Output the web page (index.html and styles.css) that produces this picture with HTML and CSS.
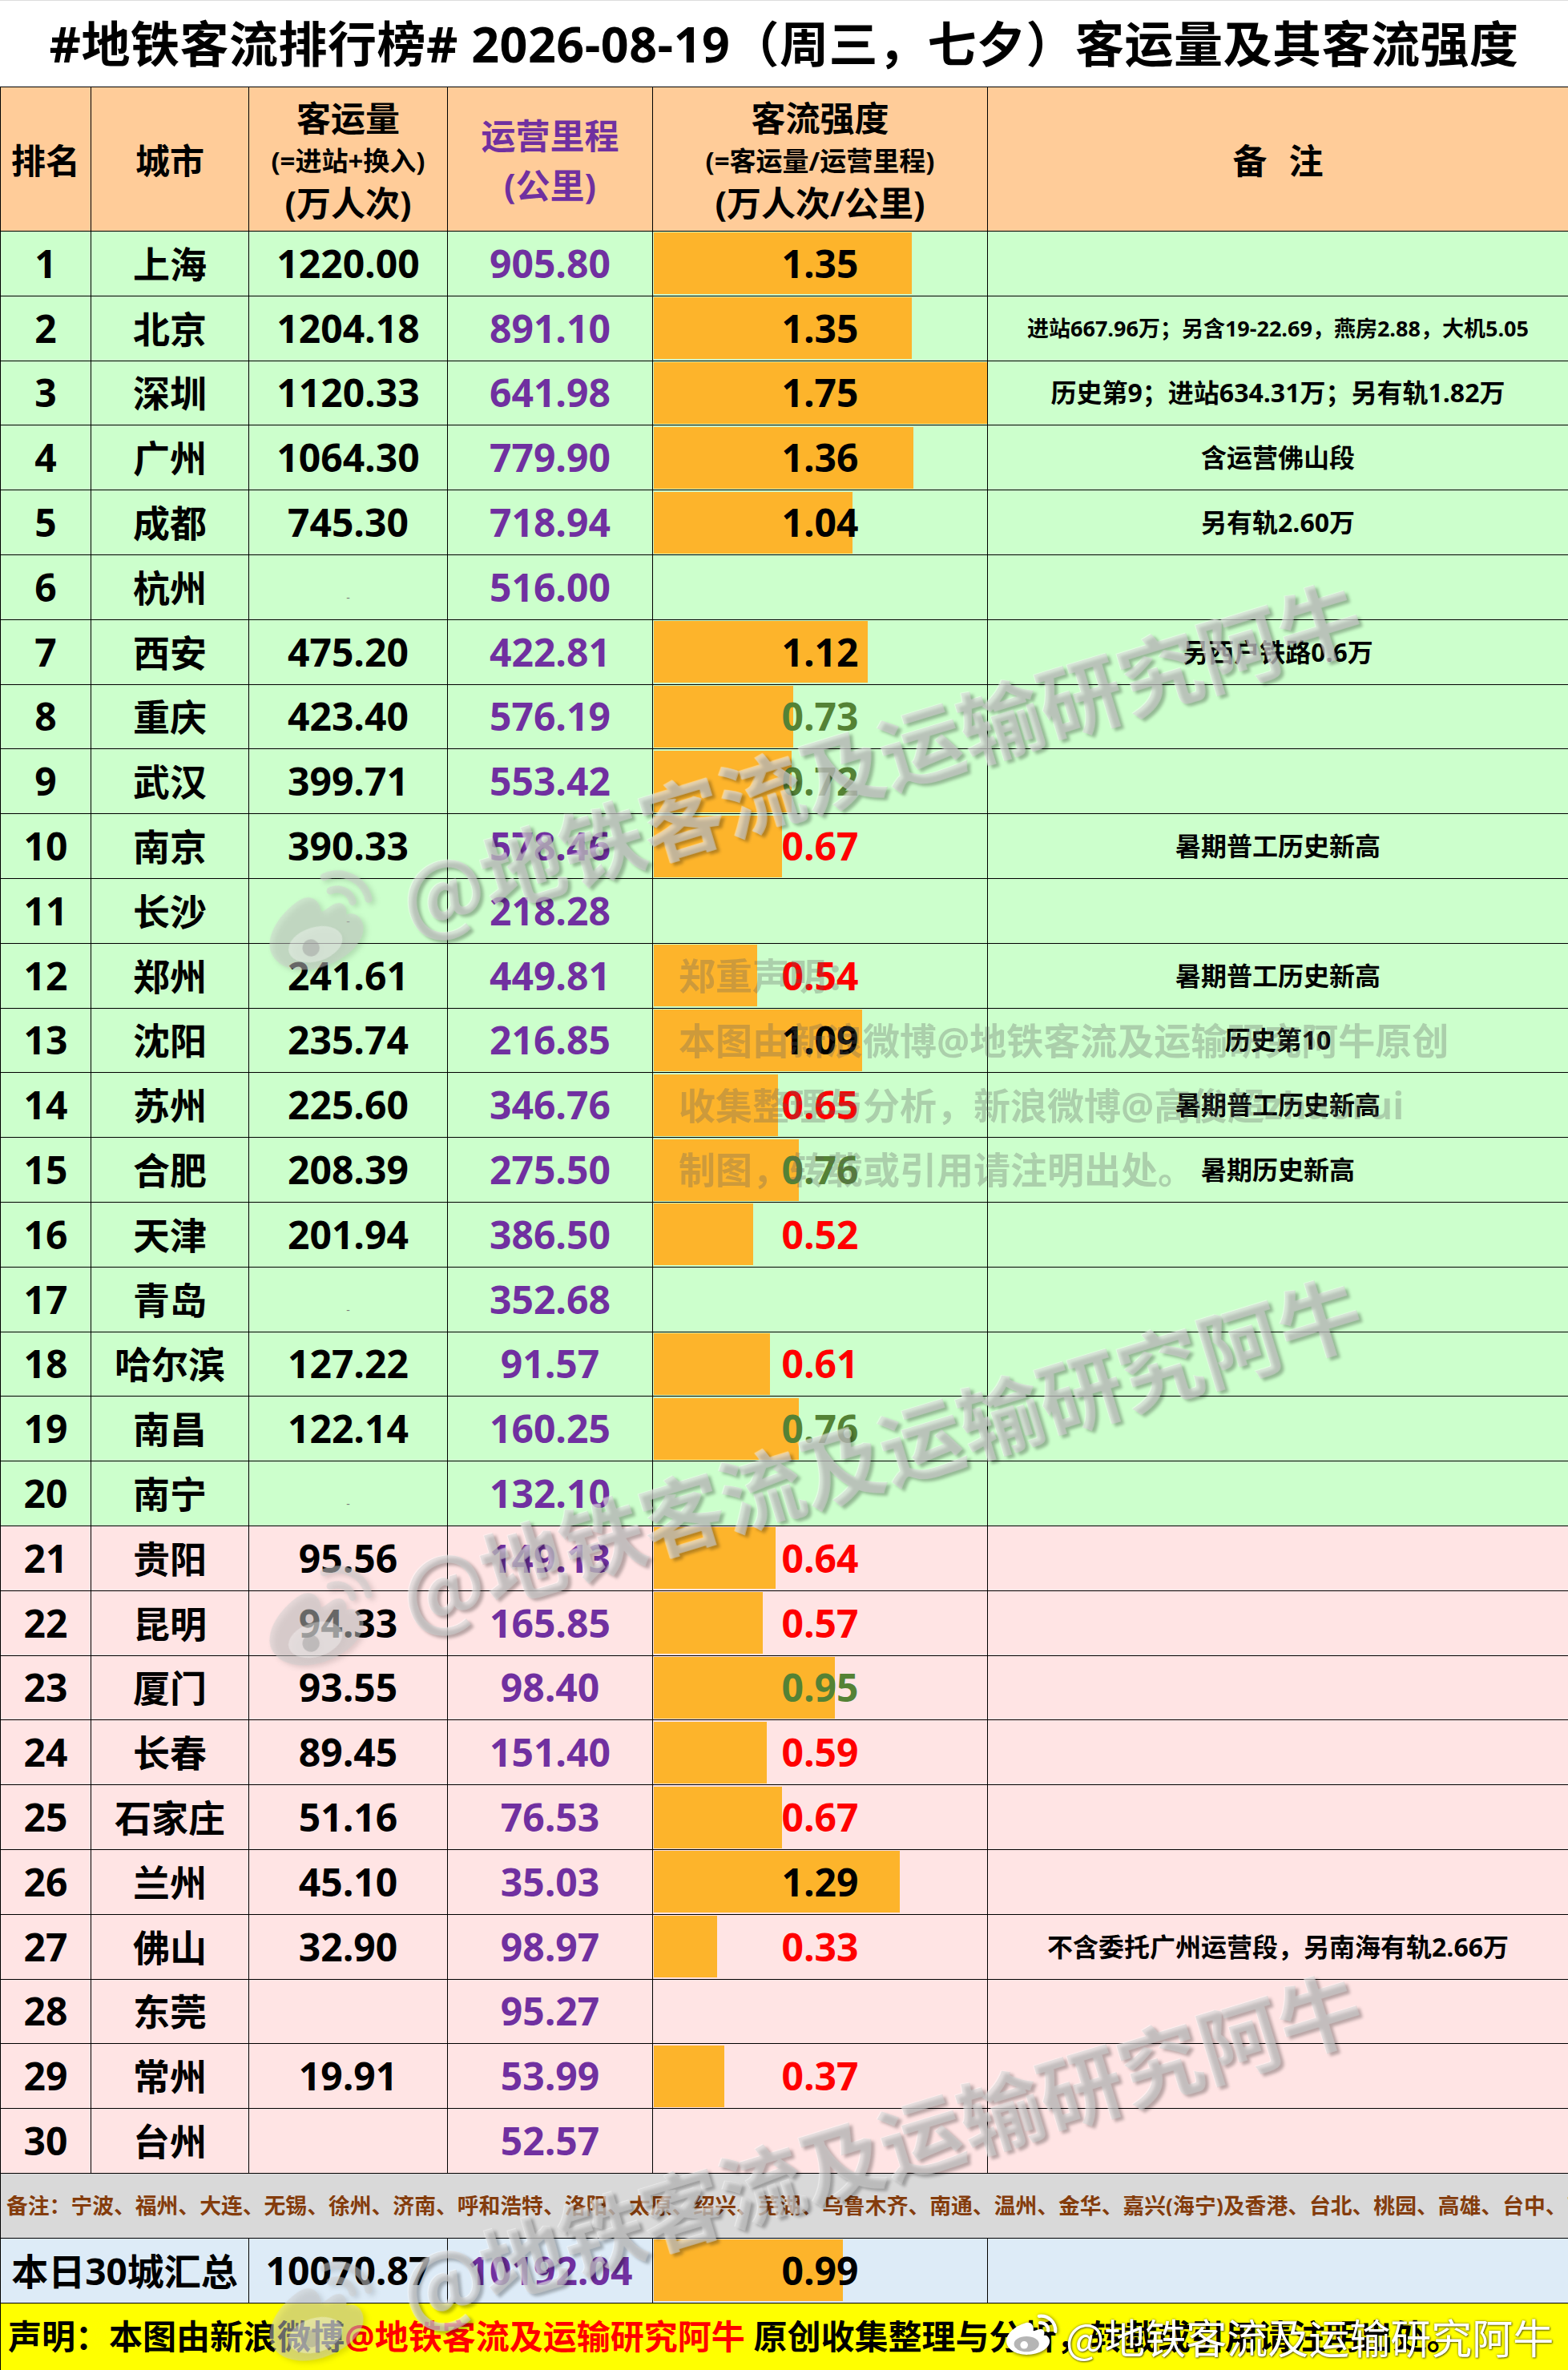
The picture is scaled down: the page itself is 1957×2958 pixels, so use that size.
FILE: index.html
```html
<!DOCTYPE html>
<html lang="zh-CN">
<head>
<meta charset="utf-8">
<title>地铁客流排行榜 2026-08-19</title>
<link rel="stylesheet" href="styles.css">
</head>
<body>
<div class="page">
  <div class="title">#地铁客流排行榜# 2026-08-19（周三，七夕）客运量及其客流强度</div>
  <table class="rank">
    <colgroup>
      <col class="c-rank"><col class="c-city"><col class="c-vol"><col class="c-len"><col class="c-int"><col class="c-note">
    </colgroup>
    <thead>
      <tr class="head">
        <th>排名</th>
        <th>城市</th>
        <th><div class="hstack"><span>客运量</span><span class="hs">(=进站+换入)</span><span>(万人次)</span></div></th>
        <th class="purple"><div class="hstack2"><span>运营里程</span><span>(公里)</span></div></th>
        <th><div class="hstack"><span>客流强度</span><span class="hs">(=客运量/运营里程)</span><span>(万人次/公里)</span></div></th>
        <th class="hnote">备 注</th>
      </tr>
    </thead>
    <tbody>
      <tr class="g"><td>1</td><td class="city">上海</td><td>1220.00</td><td class="len">905.80</td><td><div class="sc"><i class="bar" style="width:77.14%"></i><b class="v">1.35</b></div></td><td class="note"></td></tr>
      <tr class="g"><td>2</td><td class="city">北京</td><td>1204.18</td><td class="len">891.10</td><td><div class="sc"><i class="bar" style="width:77.14%"></i><b class="v">1.35</b></div></td><td class="note sm">进站667.96万；另含19-22.69，燕房2.88，大机5.05</td></tr>
      <tr class="g"><td>3</td><td class="city">深圳</td><td>1120.33</td><td class="len">641.98</td><td><div class="sc"><i class="bar" style="width:100%"></i><b class="v">1.75</b></div></td><td class="note">历史第9；进站634.31万；另有轨1.82万</td></tr>
      <tr class="g"><td>4</td><td class="city">广州</td><td>1064.30</td><td class="len">779.90</td><td><div class="sc"><i class="bar" style="width:77.71%"></i><b class="v">1.36</b></div></td><td class="note">含运营佛山段</td></tr>
      <tr class="g"><td>5</td><td class="city">成都</td><td>745.30</td><td class="len">718.94</td><td><div class="sc"><i class="bar" style="width:59.43%"></i><b class="v">1.04</b></div></td><td class="note">另有轨2.60万</td></tr>
      <tr class="g"><td>6</td><td class="city">杭州</td><td><span class="dash">-</span></td><td class="len">516.00</td><td></td><td class="note"></td></tr>
      <tr class="g"><td>7</td><td class="city">西安</td><td>475.20</td><td class="len">422.81</td><td><div class="sc"><i class="bar" style="width:64%"></i><b class="v">1.12</b></div></td><td class="note">另西户铁路0.6万</td></tr>
      <tr class="g"><td>8</td><td class="city">重庆</td><td>423.40</td><td class="len">576.19</td><td><div class="sc"><i class="bar" style="width:41.71%"></i><b class="v grn">0.73</b></div></td><td class="note"></td></tr>
      <tr class="g"><td>9</td><td class="city">武汉</td><td>399.71</td><td class="len">553.42</td><td><div class="sc"><i class="bar" style="width:41.14%"></i><b class="v grn">0.72</b></div></td><td class="note"></td></tr>
      <tr class="g"><td>10</td><td class="city">南京</td><td>390.33</td><td class="len">578.46</td><td><div class="sc"><i class="bar" style="width:38.29%"></i><b class="v red">0.67</b></div></td><td class="note">暑期普工历史新高</td></tr>
      <tr class="g"><td>11</td><td class="city">长沙</td><td><span class="dash">-</span></td><td class="len">218.28</td><td></td><td class="note"></td></tr>
      <tr class="g"><td>12</td><td class="city">郑州</td><td>241.61</td><td class="len">449.81</td><td><div class="sc"><i class="bar" style="width:30.86%"></i><b class="v red">0.54</b></div></td><td class="note">暑期普工历史新高</td></tr>
      <tr class="g"><td>13</td><td class="city">沈阳</td><td>235.74</td><td class="len">216.85</td><td><div class="sc"><i class="bar" style="width:62.29%"></i><b class="v">1.09</b></div></td><td class="note">历史第10</td></tr>
      <tr class="g"><td>14</td><td class="city">苏州</td><td>225.60</td><td class="len">346.76</td><td><div class="sc"><i class="bar" style="width:37.14%"></i><b class="v red">0.65</b></div></td><td class="note">暑期普工历史新高</td></tr>
      <tr class="g"><td>15</td><td class="city">合肥</td><td>208.39</td><td class="len">275.50</td><td><div class="sc"><i class="bar" style="width:43.43%"></i><b class="v grn">0.76</b></div></td><td class="note">暑期历史新高</td></tr>
      <tr class="g"><td>16</td><td class="city">天津</td><td>201.94</td><td class="len">386.50</td><td><div class="sc"><i class="bar" style="width:29.71%"></i><b class="v red">0.52</b></div></td><td class="note"></td></tr>
      <tr class="g"><td>17</td><td class="city">青岛</td><td><span class="dash">-</span></td><td class="len">352.68</td><td></td><td class="note"></td></tr>
      <tr class="g"><td>18</td><td class="city">哈尔滨</td><td>127.22</td><td class="len">91.57</td><td><div class="sc"><i class="bar" style="width:34.86%"></i><b class="v red">0.61</b></div></td><td class="note"></td></tr>
      <tr class="g"><td>19</td><td class="city">南昌</td><td>122.14</td><td class="len">160.25</td><td><div class="sc"><i class="bar" style="width:43.43%"></i><b class="v grn">0.76</b></div></td><td class="note"></td></tr>
      <tr class="g"><td>20</td><td class="city">南宁</td><td><span class="dash">-</span></td><td class="len">132.10</td><td></td><td class="note"></td></tr>
      <tr class="p"><td>21</td><td class="city">贵阳</td><td>95.56</td><td class="len">149.13</td><td><div class="sc"><i class="bar" style="width:36.57%"></i><b class="v red">0.64</b></div></td><td class="note"></td></tr>
      <tr class="p"><td>22</td><td class="city">昆明</td><td>94.33</td><td class="len">165.85</td><td><div class="sc"><i class="bar" style="width:32.57%"></i><b class="v red">0.57</b></div></td><td class="note"></td></tr>
      <tr class="p"><td>23</td><td class="city">厦门</td><td>93.55</td><td class="len">98.40</td><td><div class="sc"><i class="bar" style="width:54.29%"></i><b class="v grn">0.95</b></div></td><td class="note"></td></tr>
      <tr class="p"><td>24</td><td class="city">长春</td><td>89.45</td><td class="len">151.40</td><td><div class="sc"><i class="bar" style="width:33.71%"></i><b class="v red">0.59</b></div></td><td class="note"></td></tr>
      <tr class="p"><td>25</td><td class="city">石家庄</td><td>51.16</td><td class="len">76.53</td><td><div class="sc"><i class="bar" style="width:38.29%"></i><b class="v red">0.67</b></div></td><td class="note"></td></tr>
      <tr class="p"><td>26</td><td class="city">兰州</td><td>45.10</td><td class="len">35.03</td><td><div class="sc"><i class="bar" style="width:73.71%"></i><b class="v">1.29</b></div></td><td class="note"></td></tr>
      <tr class="p"><td>27</td><td class="city">佛山</td><td>32.90</td><td class="len">98.97</td><td><div class="sc"><i class="bar" style="width:18.86%"></i><b class="v red">0.33</b></div></td><td class="note">不含委托广州运营段，另南海有轨2.66万</td></tr>
      <tr class="p"><td>28</td><td class="city">东莞</td><td></td><td class="len">95.27</td><td></td><td class="note"></td></tr>
      <tr class="p"><td>29</td><td class="city">常州</td><td>19.91</td><td class="len">53.99</td><td><div class="sc"><i class="bar" style="width:21.14%"></i><b class="v red">0.37</b></div></td><td class="note"></td></tr>
      <tr class="p"><td>30</td><td class="city">台州</td><td></td><td class="len">52.57</td><td></td><td class="note"></td></tr>
    </tbody>
    <tfoot>
      <tr class="remark"><td colspan="6"><div class="remark-text">备注：宁波、福州、大连、无锡、徐州、济南、呼和浩特、洛阳、太原、绍兴、芜湖、乌鲁木齐、南通、温州、金华、嘉兴(海宁)及香港、台北、桃园、高雄、台中、高雄等城市暂未纳入统计</div></td></tr>
      <tr class="sum"><td colspan="2" class="sumlabel">本日30城汇总</td><td>10070.87</td><td class="len">10192.04</td><td><div class="sc"><i class="bar" style="width:56.57%"></i><b class="v">0.99</b></div></td><td></td></tr>
      <tr class="decl"><td colspan="6">声明：本图由新浪微博<span class="at">@地铁客流及运输研究阿牛</span> 原创收集整理与分析，转载或引用请注明出处。</td></tr>
    </tfoot>
  </table>

  <div class="wmtext">
    <div>郑重声明：</div>
    <div>本图由新浪微博@地铁客流及运输研究阿牛原创</div>
    <div>收集整理与分析，新浪微博@高俊超zhaorui</div>
    <div>制图，转载或引用请注明出处。</div>
  </div>

  <div class="wm wm1">
    <svg viewBox="0 0 120 100"><path class="wb-body" d="M50 22 C28 28 8 46 10 62 C12 80 36 90 58 88 C84 86 102 72 100 58 C99 50 92 47 88 48 C91 40 88 34 80 35 C73 36 68 40 66 38 C68 28 62 19 50 22 Z"/><ellipse class="wb-eye" cx="52" cy="66" rx="26" ry="16"/><circle class="wb-pupil" cx="47" cy="68" r="8"/><path class="wb-arc" d="M78 8 A30 30 0 0 1 112 40"/><path class="wb-arc" d="M80 22 A15 15 0 0 1 97 38"/></svg>
    <span>@地铁客流及运输研究阿牛</span>
  </div>
  <div class="wm wm2">
    <svg viewBox="0 0 120 100"><path class="wb-body" d="M50 22 C28 28 8 46 10 62 C12 80 36 90 58 88 C84 86 102 72 100 58 C99 50 92 47 88 48 C91 40 88 34 80 35 C73 36 68 40 66 38 C68 28 62 19 50 22 Z"/><ellipse class="wb-eye" cx="52" cy="66" rx="26" ry="16"/><circle class="wb-pupil" cx="47" cy="68" r="8"/><path class="wb-arc" d="M78 8 A30 30 0 0 1 112 40"/><path class="wb-arc" d="M80 22 A15 15 0 0 1 97 38"/></svg>
    <span>@地铁客流及运输研究阿牛</span>
  </div>
  <div class="wm wm3">
    <svg viewBox="0 0 120 100"><path class="wb-body" d="M50 22 C28 28 8 46 10 62 C12 80 36 90 58 88 C84 86 102 72 100 58 C99 50 92 47 88 48 C91 40 88 34 80 35 C73 36 68 40 66 38 C68 28 62 19 50 22 Z"/><ellipse class="wb-eye" cx="52" cy="66" rx="26" ry="16"/><circle class="wb-pupil" cx="47" cy="68" r="8"/><path class="wb-arc" d="M78 8 A30 30 0 0 1 112 40"/><path class="wb-arc" d="M80 22 A15 15 0 0 1 97 38"/></svg>
    <span>@地铁客流及运输研究阿牛</span>
  </div>

  <div class="wmb">
    <svg viewBox="0 0 120 100"><path class="wbw-body" d="M50 22 C28 28 8 46 10 62 C12 80 36 90 58 88 C84 86 102 72 100 58 C99 50 92 47 88 48 C91 40 88 34 80 35 C73 36 68 40 66 38 C68 28 62 19 50 22 Z"/><ellipse class="wbw-eye" cx="52" cy="66" rx="26" ry="16"/><circle class="wbw-pupil" cx="47" cy="68" r="8"/><path class="wbw-arc" d="M78 8 A30 30 0 0 1 112 40"/><path class="wbw-arc" d="M80 22 A15 15 0 0 1 97 38"/></svg>
    <span>@地铁客流及运输研究阿牛</span>
  </div>
</div>
</body>
</html>
```

FILE: styles.css
```css
html, body {
  margin: 0;
  padding: 0;
  background: #ffffff;
}

.page {
  position: relative;
  width: 1957px;
  height: 2958px;
  overflow: hidden;
  font-family: "Open Sans", "Noto Sans CJK SC", sans-serif;
  font-weight: 700;
  color: #000;
}

.title {
  height: 107px;
  border-top: 1px solid #dcdcdc;
  display: flex;
  align-items: center;
  justify-content: center;
  font-size: 61px;
  line-height: 1;
  letter-spacing: 0.5px;
}

.rank {
  border-collapse: collapse;
  table-layout: fixed;
  width: 1957px;
}

.c-rank { width: 113px; }
.c-city { width: 197px; }
.c-vol { width: 248px; }
.c-len { width: 256px; }
.c-int { width: 418px; }
.c-note { width: 725px; }

.rank th,
.rank td {
  border: 1px solid #000;
  padding: 0;
  text-align: center;
  vertical-align: middle;
  white-space: nowrap;
  overflow: hidden;
  line-height: 1;
}

.head {
  height: 180px;
}

.head th {
  background: #ffcc99;
  font-size: 43px;
  font-weight: 700;
  padding-top: 4px;
}

.hstack {
  display: flex;
  flex-direction: column;
  align-items: center;
}

.hstack span {
  line-height: 53px;
}

.hstack .hs {
  font-size: 33px;
}

.hstack2 {
  display: flex;
  flex-direction: column;
  align-items: center;
}

.hstack2 span {
  line-height: 62px;
}

.purple {
  color: #7030a0;
}

.hnote {
  word-spacing: 16px;
}

tbody tr {
  height: 80.8px;
}

tbody td {
  font-size: 48px;
}

.g td { background: #ccffcc; }
.p td { background: #ffe4e4; }

.city {
  font-size: 46px;
}

.len {
  color: #7030a0;
}

.note {
  font-size: 32px;
}

.note.sm {
  font-size: 27px;
}

.dash {
  font-size: 14px;
  font-weight: 400;
  color: #7a7a7a;
}

.sc {
  display: grid;
  grid-template-columns: 100%;
  height: 79px;
}

.sc > * {
  grid-area: 1 / 1;
}

.bar {
  display: block;
  background: #fdb42b;
  margin: 1px 0 1px 1px;
  justify-self: start;
}

.v {
  align-self: center;
  justify-self: center;
  font-weight: 700;
}

.red { color: #ff0000; }
.grn { color: #548235; }

.remark {
  height: 81px;
}

.remark td {
  background: #d9d9d9;
  text-align: left;
}

.remark-text {
  font-size: 26.8px;
  color: #843c0c;
  padding-left: 7px;
  overflow: hidden;
  white-space: nowrap;
}

.sum {
  height: 81px;
}

.sum td {
  background: #ddebf7;
  font-size: 48px;
}

.sum .sumlabel {
  font-size: 46px;
}

.decl {
  height: 84px;
}

.decl td {
  background: #ffff00;
  text-align: left;
  padding-left: 9px;
  font-size: 42px;
}

.decl .at {
  color: #ff0000;
}

/* translucent text watermark over the table */
.wmtext {
  position: absolute;
  left: 847px;
  top: 1177px;
  font-size: 46px;
  line-height: 80.8px;
  color: rgba(95, 95, 95, 0.3);
  filter: blur(0.7px);
  white-space: nowrap;
  pointer-events: none;
}

/* diagonal weibo watermarks */
.wm {
  position: absolute;
  left: 321px;
  height: 140px;
  display: flex;
  align-items: center;
  gap: 28px;
  transform: rotate(-17deg);
  transform-origin: 0 50%;
  font-family: "Noto Sans CJK SC", sans-serif;
  font-weight: 700;
  font-size: 104px;
  color: rgba(205, 205, 205, 0.5);
  text-shadow: 3px 4px 4px rgba(0, 0, 0, 0.28), -1px -1px 1px rgba(255, 255, 255, 0.45);
  white-space: nowrap;
  pointer-events: none;
}

.wm svg {
  width: 160px;
  height: 133px;
  flex: none;
  filter: drop-shadow(3px 4px 3px rgba(0, 0, 0, 0.25));
}

.wm1 { top: 1108px; }
.wm2 { top: 1976px; }
.wm3 { top: 2844px; }

.wb-body { fill: rgba(205, 205, 205, 0.5); }
.wb-eye { fill: rgba(255, 255, 255, 0.35); }
.wb-pupil { fill: rgba(150, 150, 150, 0.45); }
.wb-arc {
  fill: none;
  stroke: rgba(205, 205, 205, 0.55);
  stroke-width: 7;
  stroke-linecap: round;
}

/* bottom-right weibo watermark */
.wmb {
  position: absolute;
  left: 1250px;
  top: 2874px;
  height: 84px;
  display: flex;
  align-items: center;
  gap: 8px;
  font-family: "Noto Sans CJK SC", sans-serif;
  font-weight: 400;
  font-size: 51px;
  color: #ffffff;
  text-shadow: 0 0 3px rgba(0, 0, 0, 0.55), 1px 1px 2px rgba(0, 0, 0, 0.5);
  white-space: nowrap;
  pointer-events: none;
}

.wmb svg {
  width: 72px;
  height: 60px;
  flex: none;
  filter: drop-shadow(1px 1px 2px rgba(0, 0, 0, 0.6));
}

.wbw-body { fill: #ffffff; }
.wbw-eye { fill: rgba(120, 120, 120, 0.55); }
.wbw-pupil { fill: #ffffff; }
.wbw-arc {
  fill: none;
  stroke: #ffffff;
  stroke-width: 7;
  stroke-linecap: round;
}
```
